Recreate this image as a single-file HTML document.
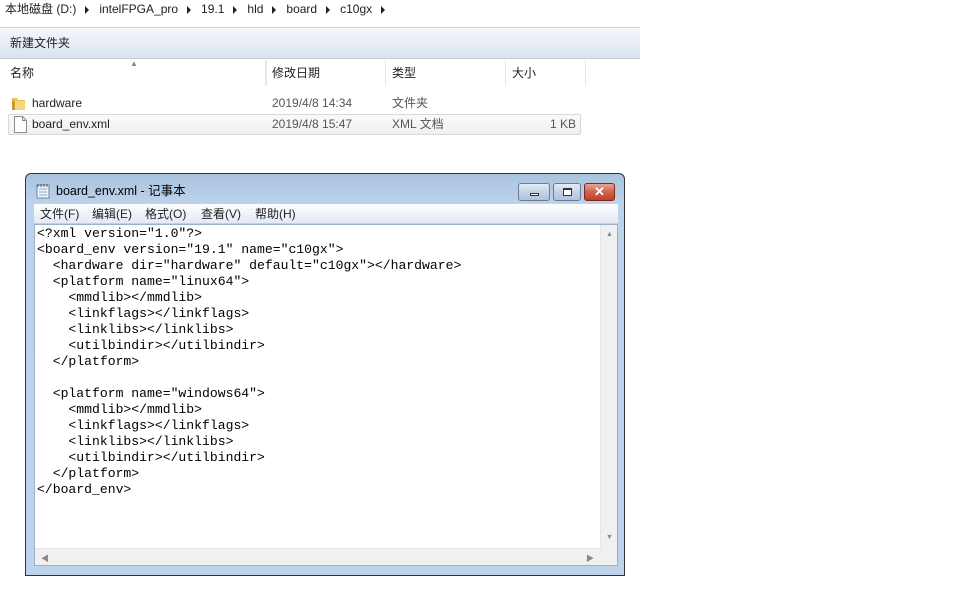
<!DOCTYPE html>
<html><head><meta charset="utf-8"><style>
*{margin:0;padding:0;box-sizing:border-box}
body{width:960px;height:596px;background:#fff;position:relative;overflow:hidden;font-family:"Liberation Sans","Noto Sans CJK SC",sans-serif;font-size:12px;color:#1e1e1e}
.a{position:absolute;white-space:nowrap;line-height:14px}
.tri{display:inline-block;width:0;height:0;border-top:4px solid transparent;border-bottom:4px solid transparent;border-left:4px solid #222;margin:0 10px 0 9px;vertical-align:middle}
#tb{position:absolute;left:0;top:27px;width:640px;height:32px;background:linear-gradient(#f5f8fc,#e4ebf4 60%,#dae3ee);border-top:1px solid #c9d4e0;border-bottom:1px solid #c6d1dc}
.col{position:absolute;top:60px;height:26px;border-right:1px solid #e5e8ec}
.row{position:absolute;left:8px;width:573px;height:21px}
#np{position:absolute;left:25px;top:173px;width:600px;height:403px;border:1px solid #333;border-radius:6px 6px 0 0;background:linear-gradient(#a9c3de,#bdd3ea 30px,#bed4ea);}
#menu{position:absolute;left:8px;top:30px;width:584px;height:20px;background:linear-gradient(#fdfeff,#e3ebf6);border-bottom:1px solid #c3cfdc}
#ed{position:absolute;left:8px;top:50px;width:584px;height:342px;background:#fff;border:1px solid #a0b0c4}
pre{position:absolute;left:2px;top:1px;font-family:"Liberation Mono",monospace;font-size:13.1px;line-height:16px;color:#000}
.btn{position:absolute;top:9px;height:18px;border:1px solid #6b7b90;border-radius:3px;background:linear-gradient(#e4ecf5,#c3d3e6 50%,#b0c4dc)}
</style></head><body>
<div class="a" style="left:5px;top:2px;font-size:12px">本地磁盘 (D:)<span class="tri"></span>intelFPGA_pro<span class="tri"></span>19.1<span class="tri"></span>hld<span class="tri"></span>board<span class="tri"></span>c10gx<span class="tri"></span></div>
<div id="tb"><div class="a" style="left:10px;top:8px">新建文件夹</div></div>
<div class="col" style="left:0;width:266px"></div>
<div class="col" style="left:266px;width:120px;border-left:1px solid #e5e8ec"></div>
<div class="col" style="left:386px;width:120px"></div>
<div class="col" style="left:506px;width:80px"></div>
<div class="a" style="left:130px;top:57px;font-size:8px;color:#7a8aa0">▲</div>
<div class="a" style="left:10px;top:66px">名称</div>
<div class="a" style="left:272px;top:66px">修改日期</div>
<div class="a" style="left:392px;top:66px">类型</div>
<div class="a" style="left:512px;top:66px">大小</div>
<div class="row" style="top:93px"></div>
<svg class="a" style="left:11px;top:95px" width="16" height="16"><path d="M1 3h5l1 2h7v10H1z" fill="#e9c25a"/><path d="M3 6h11v9H3z" fill="#f5d67a"/><path d="M1 4v11h3V7z" fill="#c99a2e"/></svg>
<div class="a" style="left:32px;top:96px">hardware</div>
<div class="a" style="left:272px;top:96px;color:#555">2019/4/8 14:34</div>
<div class="a" style="left:392px;top:96px;color:#555">文件夹</div>
<div class="row" style="top:114px;border:1px solid #d8d8d8;border-radius:2px;background:linear-gradient(#fafafa,#f0f0f0)"></div>
<svg class="a" style="left:14px;top:116px" width="13" height="17"><path d="M.5 .5h8l4 4v12H.5z" fill="#fff" stroke="#8a8a8a"/><path d="M8.5 .5v4h4" fill="none" stroke="#8a8a8a"/></svg>
<div class="a" style="left:32px;top:117px">board_env.xml</div>
<div class="a" style="left:272px;top:117px;color:#555">2019/4/8 15:47</div>
<div class="a" style="left:392px;top:117px;color:#555">XML 文档</div>
<div class="a" style="left:550px;top:117px;color:#555">1 KB</div>

<div id="np">
<svg class="a" style="left:10px;top:9px" width="14" height="16"><rect x="1" y="2" width="12" height="13" fill="#eef6fb" stroke="#6a8aa8"/><path d="M3 6h8M3 9h8M3 12h8" stroke="#8ab" /><path d="M2 1v3M5 1v3M8 1v3M11 1v3" stroke="#557"/></svg>
<div class="a" style="left:30px;top:10px;font-size:12.5px;color:#000">board_env.xml - 记事本</div>
<div class="btn" style="left:492px;width:32px"><div style="position:absolute;left:11px;top:9px;width:9px;height:3px;background:#fff;border:1px solid #333"></div></div>
<div class="btn" style="left:527px;width:28px"><div style="position:absolute;left:9px;top:4px;width:9px;height:8px;border:1px solid #333;border-top-width:2px;background:#fff"></div></div>
<div class="btn" style="left:558px;width:31px;background:linear-gradient(#e9a493,#d0624a 50%,#c0402a);border-color:#7a2a1c"><div style="position:absolute;left:0;top:0;width:29px;text-align:center;color:#fff;font-weight:bold;font-size:13px;line-height:16px">✕</div></div>
<div id="menu"><div class="a" style="left:6px;top:3px">文件(F)</div><div class="a" style="left:58px;top:3px">编辑(E)</div><div class="a" style="left:111px;top:3px">格式(O)</div><div class="a" style="left:167px;top:3px">查看(V)</div><div class="a" style="left:221px;top:3px">帮助(H)</div></div>
<div id="ed">
<pre>&lt;?xml version="1.0"?&gt;
&lt;board_env version="19.1" name="c10gx"&gt;
  &lt;hardware dir="hardware" default="c10gx"&gt;&lt;/hardware&gt;
  &lt;platform name="linux64"&gt;
    &lt;mmdlib&gt;&lt;/mmdlib&gt;
    &lt;linkflags&gt;&lt;/linkflags&gt;
    &lt;linklibs&gt;&lt;/linklibs&gt;
    &lt;utilbindir&gt;&lt;/utilbindir&gt;
  &lt;/platform&gt;

  &lt;platform name="windows64"&gt;
    &lt;mmdlib&gt;&lt;/mmdlib&gt;
    &lt;linkflags&gt;&lt;/linkflags&gt;
    &lt;linklibs&gt;&lt;/linklibs&gt;
    &lt;utilbindir&gt;&lt;/utilbindir&gt;
  &lt;/platform&gt;
&lt;/board_env&gt;</pre>
<div style="position:absolute;right:0;top:0;width:17px;height:323px;background:#f0f0f0;border-left:1px solid #e6e6e6"><div class="a" style="left:5px;top:3px;font-size:7px;color:#888">▲</div><div class="a" style="left:5px;bottom:3px;font-size:7px;color:#888">▼</div></div>
<div style="position:absolute;left:0;bottom:0;width:565px;height:17px;background:#f0f0f0;border-top:1px solid #e6e6e6"><div class="a" style="left:6px;top:3px;font-size:8px;color:#888">◀</div><div class="a" style="right:6px;top:3px;font-size:8px;color:#888">▶</div></div>
<div style="position:absolute;right:0;bottom:0;width:17px;height:17px;background:#f0f0f0"></div>
</div>
</div>
</body></html>
